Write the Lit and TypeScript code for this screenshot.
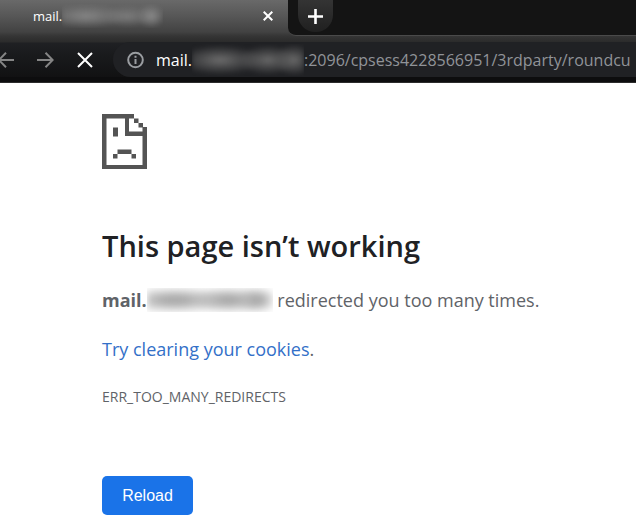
import { LitElement, html, css } from "lit";
import { customElement } from "lit/decorators.js";

@customElement("browser-bar")
class BrowserBar extends LitElement {
  static styles = css`
    :host {
      display: block;
      font-family: "Open Sans", "Noto Sans", sans-serif;
      color: #fff;
      background: linear-gradient(#696969 0, #575757 16px, #424242 32px, #353535 36px, #2b2b2b 42px, #1f2023 43px, #191a1c 56px, #0f0f10 83px);
      overflow: hidden;
    }
    .tabs { display: flex; height: 36px; }
    .tab {
      display: flex;
      align-items: center;
      flex: none;
      box-sizing: border-box;
      width: 288px;
      height: 32px;
      padding: 0 12px 0 33px;
      font-size: 13px;
    }
    .name { display: flex; flex: 1; align-items: center; white-space: nowrap; }
    .strip {
      flex: 1;
      background: #141414;
      border-bottom: 1px solid #4a4a4a;
      border-bottom-left-radius: 8px;
      box-sizing: border-box;
      padding-left: 10px;
    }
    button {
      display: flex;
      align-items: center;
      justify-content: center;
      flex: none;
      border: 0;
      padding: 0;
      background: none;
      color: inherit;
    }
    svg { display: block; fill: none; stroke: currentColor; stroke-width: 2; }
    .close { width: 16px; height: 16px; }
    .add {
      width: 35px;
      height: 32px;
      border-radius: 0 0 17px 17px;
      background: linear-gradient(#343434, #202020);
    }
    .toolbar {
      display: flex;
      align-items: center;
      height: 41px;
      padding-top: 6px;
      box-sizing: border-box;
    }
    .nav { display: flex; flex: none; width: 113px; align-items: center; color: #858585; }
    .nav button { width: 40px; height: 32px; }
    .nav .back { width: 25px; justify-content: flex-start; }
    .nav .stop { color: #fff; }
    .address {
      display: flex;
      align-items: center;
      flex: 1;
      min-width: 0;
      height: 35px;
      padding-left: 13px;
      border-radius: 18px 0 0 18px;
      background: #202124;
      font-size: 16px;
      white-space: nowrap;
      overflow: hidden;
    }
    .info { color: #9a9da1; flex: none; margin-right: 11px; }
    .path { color: #909398; }
    .edge { height: 6px; box-sizing: border-box; background: #0d0d0e; border-bottom: 1px solid #2c2c2c; }
    .smear { flex: none; overflow: hidden; }
    .smear i { display: block; height: 100%; filter: blur(2px); }
    .small { width: 101px; height: 24px; }
    .small i {
      background:
        radial-gradient(ellipse 44px 12px at 24px 12px, #858585, transparent),
        radial-gradient(ellipse 26px 11px at 66px 12px, #7c7c7c, transparent),
        radial-gradient(ellipse 14px 12px at 89px 12px, #8c8c8c, transparent);
    }
    .large { width: 112px; height: 32px; }
    .large i {
      background:
        radial-gradient(ellipse 44px 15px at 28px 16px, #6c6c6c, transparent),
        radial-gradient(ellipse 30px 15px at 76px 16px, #686868, transparent),
        radial-gradient(ellipse 20px 16px at 102px 16px, #686868, transparent);
    }
  `;

  render() {
    return html`
      <div class="tabs">
        <div class="tab">
          <span class="name">mail.<span class="smear small"><i></i></span></span>
          <button class="close" aria-label="Close tab">
            <svg width="10" height="10" viewBox="0 0 10 10"><path d="M.7.7l8.6 8.6M9.3.7L.7 9.3" /></svg>
          </button>
        </div>
        <div class="strip">
          <button class="add" aria-label="New tab">
            <svg width="15" height="15" viewBox="0 0 15 15"><path stroke-width="2.6" d="M7.5 0v15M0 7.5h15" /></svg>
          </button>
        </div>
      </div>
      <div class="toolbar">
        <div class="nav">
          <button class="back" aria-label="Back">
            <svg width="14" height="16" viewBox="0 0 14 16"><path d="M14 8H-1M6 .8L-1.2 8 6 15.2" /></svg>
          </button>
          <button aria-label="Forward">
            <svg width="17" height="16" viewBox="0 0 17 16"><path d="M0 8h15.5M8.5.8L15.7 8l-7.2 7.2" /></svg>
          </button>
          <button class="stop" aria-label="Stop loading">
            <svg width="16" height="16" viewBox="0 0 16 16"><path d="M1 1l14 14M15 1L1 15" /></svg>
          </button>
        </div>
        <div class="address">
          <svg class="info" width="19" height="18" viewBox="0 0 19 18">
            <circle cx="9.5" cy="9" r="7.3" /><path d="M9.5 8v5M9.5 4.8v2" />
          </svg>
          <span>mail.</span><span class="smear large"><i></i></span><span class="path">:2096/cpsess4228566951/3rdparty/roundcu</span>
        </div>
      </div>
      <div class="edge"></div>
    `;
  }
}

@customElement("error-page")
class ErrorPage extends LitElement {
  static styles = css`
    :host {
      display: block;
      padding: 31px 24px 16px 102px;
      font-family: "Open Sans", "Noto Sans", sans-serif;
      font-size: 18px;
      line-height: 24px;
      color: #5f6368;
    }
    svg { display: block; }
    h1 {
      margin: 56px 0 0;
      font-size: 29px;
      line-height: 42px;
      font-weight: 600;
      color: #202124;
    }
    p { margin: 0; }
    .summary { display: flex; align-items: center; flex-wrap: wrap; margin-top: 21px; white-space: pre; }
    .link { margin-top: 25px; }
    a { color: #3370c8; text-decoration: none; }
    .code { margin-top: 24px; font-size: 14px; }
    button {
      display: block;
      width: 91px;
      height: 39px;
      margin-top: 67px;
      padding: 0;
      border: 0;
      border-radius: 5px;
      background: #1a73e8;
      color: #fff;
      font: 16px "Liberation Sans", Arial, sans-serif;
    }
    .smear { width: 126px; height: 24px; overflow: hidden; }
    .smear i {
      display: block;
      height: 100%;
      filter: blur(3px);
      background:
        radial-gradient(ellipse 60px 14px at 28px 12px, #aaa 20%, transparent),
        radial-gradient(ellipse 38px 14px at 82px 12px, #aaa 20%, transparent),
        radial-gradient(ellipse 22px 14px at 110px 12px, #aaa 20%, transparent);
    }
  `;

  render() {
    return html`
      <svg width="45" height="55" viewBox="0 0 45 55" fill="#545454" aria-hidden="true">
        <path fill-rule="evenodd" d="M0 0h32v4.500h-5v13h13.500v-4.500H45V55H0zM4.500 4.500v46.500h36V22H23V4.500z" />
        <path d="M32 4.500h4.500V9H32zM36.500 9H41v4.500h-4.500zM11 13.500h5v9h-5zM15.500 35.500h14v4.500h-14zM11 40h4.500v4.500H11zM29.500 40H34v4.500h-4.500z" />
      </svg>
      <h1>This page isn’t working</h1>
      <p class="summary"><b>mail.</b><span class="smear"><i></i></span><span> redirected you too many times.</span></p>
      <p class="link"><a href="#cookies">Try clearing your cookies</a>.</p>
      <p class="code">ERR_TOO_MANY_REDIRECTS</p>
      <button>Reload</button>
    `;
  }
}

@customElement("app-root")
class AppRoot extends LitElement {
  static styles = css`
    :host { display: block; min-height: 100vh; background: #fff; overflow: hidden; }
  `;

  render() {
    return html`<browser-bar></browser-bar><error-page></error-page>`;
  }
}
